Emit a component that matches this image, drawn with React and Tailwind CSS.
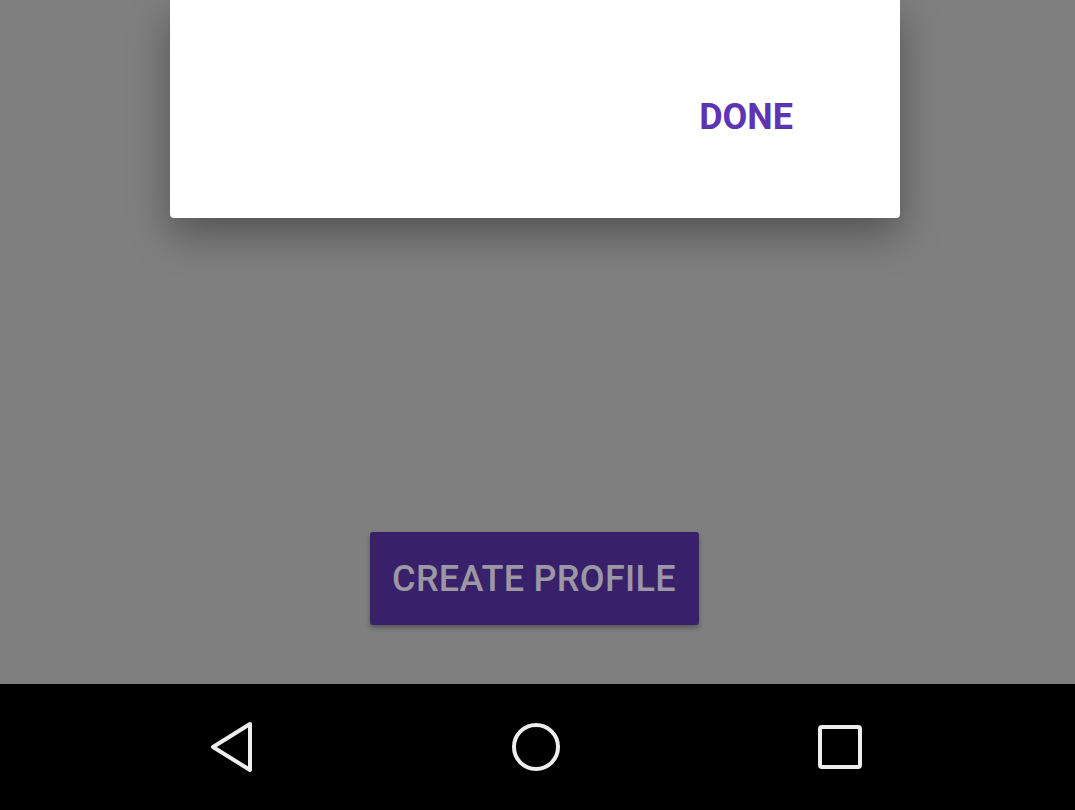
// App.jsx — dimmed Android screen with a dialog and nav bar
export default function App() {
  return (
    <div className="w-[1075px] h-[810px] flex flex-col bg-[#7f7f7f] overflow-hidden" style={{ fontFamily: 'Roboto, "Liberation Sans", sans-serif' }}>
      {/* Screen content under the scrim */}
      <div className="flex-1 flex flex-col items-center">
        {/* Dialog */}
        <div className="w-[730px] h-[218px] ml-[-5px] bg-white rounded-b-[4px] shadow-[0_16px_40px_rgba(0,0,0,0.35)] flex justify-end">
          <div className="mt-[96px] mr-[107px] h-[42px] flex items-center text-[36px] font-bold text-[#5e35b1]">
            DONE
          </div>
        </div>

        {/* Create profile button */}
        <div className="mt-[314px] w-[329px] h-[93px] ml-[-7px] rounded-[3px] bg-[#38206b] shadow-[0_3px_5px_rgba(0,0,0,0.3)] flex items-center justify-center">
          <span className="text-[36px] font-medium text-[#9c98a3] tracking-[0.3px]">CREATE PROFILE</span>
        </div>
      </div>

      {/* Navigation bar */}
      <div className="h-[126px] bg-black flex items-center">
        <div className="w-full flex items-center justify-between pl-[209px] pr-[212px]">
          <svg width="46" height="52" viewBox="0 0 46 52" className="text-[#eeeeee]">
            <path d="M41 3 L4 26 L41 49 Z" fill="none" stroke="currentColor" strokeWidth="4" strokeLinejoin="round" />
          </svg>
          <svg width="52" height="52" viewBox="0 0 52 52" className="text-[#eeeeee]">
            <circle cx="26" cy="26" r="22" fill="none" stroke="currentColor" strokeWidth="4" />
          </svg>
          <svg width="46" height="46" viewBox="0 0 46 46" className="text-[#eeeeee]">
            <rect x="3" y="3" width="40" height="40" rx="2" fill="none" stroke="currentColor" strokeWidth="4" />
          </svg>
        </div>
      </div>
    </div>
  )
}
